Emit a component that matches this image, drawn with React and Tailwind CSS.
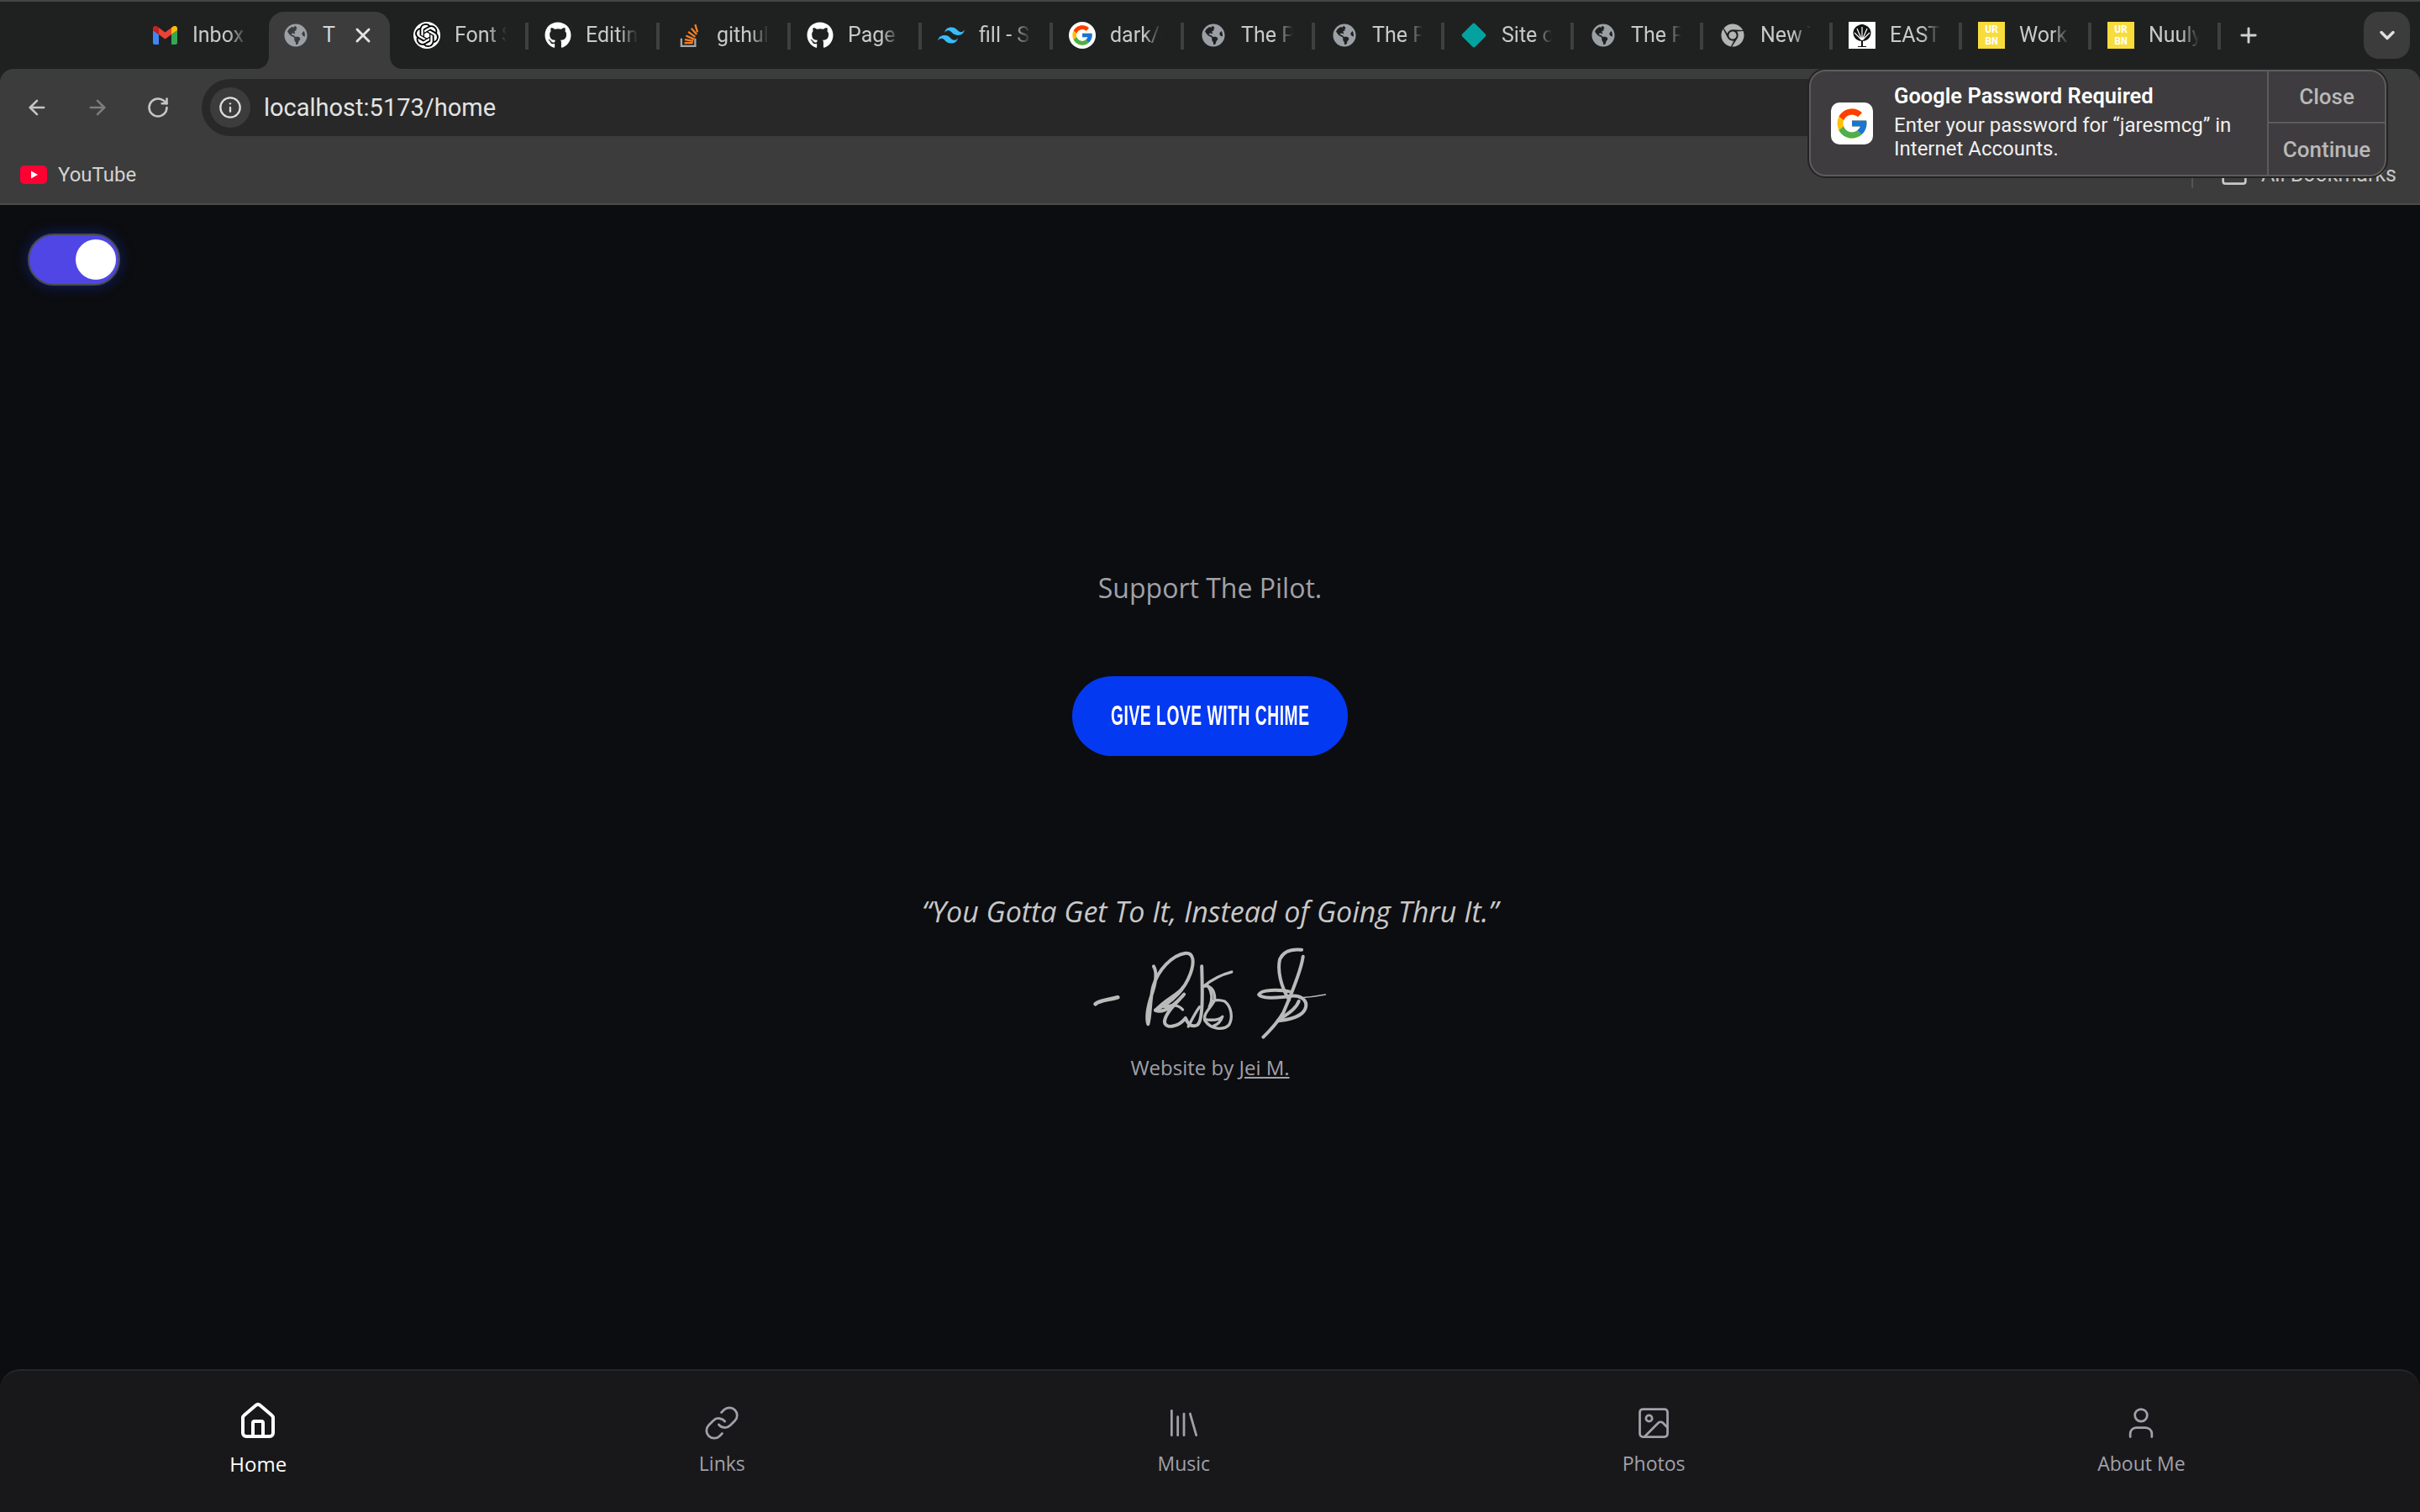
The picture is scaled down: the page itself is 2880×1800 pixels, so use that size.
import React from "react";
import { FaGithub, FaGlobeAmericas, FaChrome } from "react-icons/fa";
import { SiOpenai, SiTailwindcss } from "react-icons/si";
import { FcGoogle } from "react-icons/fc";
import { ArrowLeft, ArrowRight, RotateCw, Info, X, Plus, ChevronDown, House, Library, Image, User, Folder } from "lucide-react";

const Gmail = () => (
  <svg viewBox="0 0 29 22" className="w-[29px] h-[22px]">
    <path d="M0 5v15a2 2 0 0 0 2 2h5V10z" fill="#4285f4" />
    <path d="M29 5v15a2 2 0 0 1-2 2h-5V10z" fill="#34a853" />
    <path d="M22 2v8l7-5V3c0-3-3-4-5-2.5z" fill="#fbbc04" />
    <path d="M7 2v8l7.5 5.5L22 10V2l-7.500 5.500z" fill="#ea4335" />
    <path d="M0 3v2l7 5V2L5 .5C3-1 0 0 0 3z" fill="#c5221f" />
  </svg>
);

const Round = ({ children }) => (
  <div className="w-8 h-8 rounded-full bg-white flex items-center justify-center overflow-hidden">{children}</div>
);

const Globe = () => <FaGlobeAmericas className="w-7 h-7 text-[#9aa0a6]" />;

const StackOverflow = () => (
  <svg viewBox="0 0 24 32" className="w-[22px] h-[30px]" fill="none">
    <path d="M2 20v10h18V20" stroke="#a8a8a8" strokeWidth="2.500" />
    <path d="M6 26h11M6.500 21.500l11 2M8 16.500l10.500 4.500M11 11.500l9 6.500M15 7l7 8M20 2l3 10" stroke="#f48024" strokeWidth="2.500" />
  </svg>
);

const Urbn = () => (
  <div className="w-8 h-8 bg-[#f8dc3c] flex flex-col items-center justify-center text-white text-[13px] leading-[14px] font-bold font-['DejaVu_Sans_Mono',monospace]">
    <span>UR</span>
    <span>BN</span>
  </div>
);

const East = () => (
  <div className="w-8 h-8 bg-white flex items-center justify-center">
    <svg viewBox="0 0 32 32" className="w-8 h-8">
      <path d="M16 23C8 23 4 16 6 10c2-5 7-7 10-7s8 2 10 7c2 6-2 13-10 13z" fill="#111" />
      <path d="M16 22V6M16 22 10 8M16 22 22 8M16 22 7 13M16 22l9-9" stroke="#fff" strokeWidth="1.200" />
      <path d="M15 22h2v7h-2zM11 29h10v1H11z" fill="#111" />
    </svg>
  </div>
);

const TabIcon = ({ children }) => <div className="w-8 h-8 shrink-0 flex items-center justify-center">{children}</div>;

const Tab = ({ icon, title, narrow, noSep }) => (
  <div className={narrow ? "w-[154px] h-[58px] shrink-0 flex items-center" : "w-[156px] h-[58px] shrink-0 flex items-center"}>
    <div className="flex-1 min-w-0 flex items-center pl-[19px] pr-[22px] gap-[17px] -mt-[2px]">
      <TabIcon>{icon}</TabIcon>
      <span className="flex-1 min-w-0 overflow-hidden whitespace-nowrap text-[25px] leading-8 text-[#c9c9c9] font-['Roboto',sans-serif] [mask-image:linear-gradient(to_right,black_65%,transparent_100%)]">
        {title}
      </span>
    </div>
    {noSep ? null : <div className="w-1 h-8 shrink-0 bg-[#3d4040]" />}
  </div>
);

const ActiveTab = () => (
  <div className="w-[156px] h-[68px] shrink-0 pl-[3px] pr-[9px]">
    <div className="relative h-full bg-[#3c3c3c] rounded-t-[18px] flex items-center pl-[18px] pb-3 gap-[18px]">
      <svg viewBox="0 0 16 16" className="absolute -left-4 bottom-0 w-4 h-4"><path d="M16 0v16H0C10 16 16 10 16 0z" fill="#3c3c3c" /></svg>
      <svg viewBox="0 0 16 16" className="absolute -right-4 bottom-0 w-4 h-4"><path d="M0 0v16h16C6 16 0 10 0 0z" fill="#3c3c3c" /></svg>
      <Globe />
      <span className="text-[25px] leading-8 text-[#d8d8d8] font-['Roboto',sans-serif]">T</span>
      <X className="w-7 h-7 ml-[1px] text-[#e4e4e4]" strokeWidth={2.500} />
    </div>
  </div>
);

const NavItem = ({ icon, label, active }) => (
  <div className="flex flex-col items-center">
    <div className={active ? "h-12 flex items-center justify-center text-white" : "h-11 mt-1 flex items-center justify-center text-[#a1a1aa]"}>{icon}</div>
    <span className={active ? "mt-[11px] text-[24px] leading-8 text-white font-['Open_Sans',sans-serif]" : "mt-[10px] text-[23px] leading-8 text-[#a1a1aa] font-['Open_Sans',sans-serif]"}>
      {label}
    </span>
  </div>
);

const Signature = () => (
  <svg viewBox="90 55 835 330" className="w-[278px] h-[110px]" fill="none" stroke="#bababa" strokeWidth="12" strokeLinecap="round" strokeLinejoin="round">
    <path d="M98 260C115 245 140 247 178 236" strokeWidth="14" />
    <path d="M306 125C322 150 312 190 298 230C285 270 278 305 286 332C296 300 292 240 305 195C322 140 370 85 420 78C450 76 452 110 438 150C420 200 380 250 312 282C340 295 375 270 415 225C400 245 345 290 345 325C350 350 395 342 420 310C428 330 440 345 462 335C485 320 480 200 478 125" />
    <path d="M312 282C350 240 395 225 410 200M430 340C445 310 455 290 470 270M500 195C520 225 515 250 505 270M345 270C370 262 395 262 410 280" strokeWidth="10" />
    <path d="M585 145C545 155 510 175 482 198C505 190 525 205 525 245C510 275 480 295 490 320C510 350 555 355 575 335C590 310 585 270 560 250C545 245 530 245 520 248" strokeWidth="10" />
    <path d="M488 315C510 318 540 318 552 305C545 325 530 335 520 338" strokeWidth="10" />
    <path d="M835 66C800 62 770 70 757 100C748 140 760 195 790 245" />
    <path d="M840 90C835 130 800 220 770 290C750 325 722 355 698 378" />
    <path d="M790 215C750 207 690 208 682 226C690 240 740 240 790 232C830 225 855 245 850 270C845 300 800 315 750 320C775 300 815 280 825 250" />
    <path d="M825 238C860 236 890 232 920 226" strokeWidth="5" />
  </svg>
);

const LinkIcon = () => (
  <svg viewBox="0 0 24 24" className="w-11 h-11" fill="none" stroke="currentColor" strokeWidth="1.500" strokeLinecap="round" strokeLinejoin="round">
    <path d="M10 13a5 5 0 0 0 7.540.540l3-3a5 5 0 0 0-7.070-7.070l-1.720 1.710" />
    <path d="M14 11a5 5 0 0 0-7.540-.540l-3 3a5 5 0 0 0 7.070 7.070l1.710-1.710" />
  </svg>
);

export default function App() {
  return (
    <div className="relative w-full h-[1800px] flex flex-col bg-[#0c0d10] overflow-hidden">
      {/* browser chrome */}
      <div className="shrink-0 bg-[#1f2120] border-t-2 border-[#454545]">
        <div className="h-[80px] pt-3 pl-[161px] pr-3 flex items-start">
          <Tab icon={<Gmail />} title="Inbox" noSep />
          <ActiveTab />
          <Tab icon={<Round><SiOpenai className="w-7 h-7 text-black" /></Round>} title="Font S" />
          <Tab icon={<FaGithub className="w-8 h-8 text-white" />} title="Editin" />
          <Tab icon={<StackOverflow />} title="githul" />
          <Tab icon={<FaGithub className="w-8 h-8 text-white" />} title="Page" />
          <Tab icon={<SiTailwindcss className="w-8 h-8 text-[#38bdf8]" />} title="fill - S" />
          <Tab icon={<Round><FcGoogle className="w-7 h-7" /></Round>} title="dark/l" />
          <Tab icon={<Globe />} title="The P" />
          <Tab icon={<Globe />} title="The P" narrow />
          <Tab icon={<div className="w-[30px] h-[30px] bg-[#04a29f] rotate-45 scale-[.72] rounded-[3px]" />} title="Site o" narrow />
          <Tab icon={<Globe />} title="The P" narrow />
          <Tab icon={<FaChrome className="w-7 h-7 text-[#b4b4b4]" />} title="New T" narrow />
          <Tab icon={<East />} title="EAST" narrow />
          <Tab icon={<Urbn />} title="Work" narrow />
          <Tab icon={<Urbn />} title="Nuuly" narrow />
          <div className="h-[56px] flex items-center ml-[19px]">
            <Plus className="w-7 h-7 text-[#d0d0d0]" strokeWidth={2.500} />
          </div>
          <div className="ml-auto w-[55px] h-[56px] rounded-[18px] bg-[#3c3c3c] flex items-center justify-center">
            <ChevronDown className="w-7 h-7 text-[#e0e0e0]" strokeWidth={3} />
          </div>
        </div>
        <div className="h-[162px] bg-[#3c3c3c] rounded-t-[16px] border-b-2 border-[#4c4c4c] flex flex-col">
          <div className="h-[68px] mt-3 flex items-center pl-[30px] pr-[60px]">
            <ArrowLeft className="w-7 h-7 text-[#c6c6c6]" strokeWidth={2.200} />
            <ArrowRight className="w-7 h-7 ml-[44px] text-[#7d7d7d]" strokeWidth={2.200} />
            <RotateCw className="w-7 h-7 ml-[44px] text-[#c6c6c6]" strokeWidth={2.200} />
            <div className="ml-[38px] flex-1 h-[68px] rounded-full bg-[#282828] flex items-center pl-[10px]">
              <div className="w-12 h-12 rounded-full bg-[#3c3c3c] flex items-center justify-center">
                <Info className="w-7 h-7 text-[#dcdcdc]" strokeWidth={2} />
              </div>
              <span className="ml-4 text-[29px] leading-9 text-[#e3e3e3] font-['Roboto',sans-serif]">localhost:5173/home</span>
            </div>
          </div>
          <div className="flex-1 flex items-center pl-6 pr-7 pt-3">
            <svg viewBox="0 0 32 22" className="w-8 h-[22px]">
              <rect width="32" height="22" rx="5" fill="#ff0033" />
              <path d="M13 6.500l8 4.500-8 4.500z" fill="#fff" />
            </svg>
            <span className="ml-[13px] text-[24px] leading-8 text-[#d2d2d2] font-['Roboto',sans-serif]">YouTube</span>
            <div className="ml-auto w-[2px] h-8 bg-[#555555]" />
            <Folder className="ml-[33px] w-8 h-8 text-[#c8c8c8]" strokeWidth={2} />
            <span className="ml-4 text-[25px] leading-8 text-[#c8c8c8] font-['Roboto',sans-serif]">All Bookmarks</span>
          </div>
        </div>
      </div>

      {/* macOS notification */}
      <div className="absolute left-[2153px] top-[83px] w-[687px] h-[127px] rounded-[20px] bg-[#3e3c3e] border-2 border-[#5c5c5c] shadow-[0_0_0_2px_#232323] flex overflow-hidden">
        <div className="flex-1 flex items-center pl-[24px] gap-[25px]">
          <div className="w-[50px] h-[50px] rounded-[10px] bg-white flex items-center justify-center shrink-0">
            <FcGoogle className="w-[42px] h-[42px]" />
          </div>
          <div className="flex flex-col font-['Roboto',sans-serif] text-white -mt-[3px]">
            <span className="text-[25.500px] leading-[30px] font-semibold">Google Password Required</span>
            <span className="mt-[6px] text-[24px] leading-[28px] text-[#f0f0f0]">Enter your password for “jaresmcg” in</span>
            <span className="text-[24px] leading-[28px] text-[#f0f0f0]">Internet Accounts.</span>
          </div>
        </div>
        <div className="w-[140px] shrink-0 border-l-2 border-[#5c5c5c] flex flex-col text-[26px] text-[#b8b8b8] font-['Roboto',sans-serif] font-medium">
          <div className="h-[62px] flex items-center justify-center border-b-2 border-[#5c5c5c]">Close</div>
          <div className="flex-1 flex items-center justify-center pt-[2px]">Continue</div>
        </div>
      </div>

      {/* page */}
      <main className="flex-1 flex flex-col">
        <div className="pl-[33px] pt-[34px]">
          <div className="w-[110px] h-[62px] rounded-full bg-[#4f46e5] border-2 border-[#4a4a4a] shadow-[0_0_16px_#10206e] flex items-center justify-end pr-[3px]">
            <div className="w-12 h-12 rounded-full bg-white" />
          </div>
        </div>
        <div className="mt-[338px] flex flex-col items-center font-['Open_Sans',sans-serif]">
          <p className="text-[32px] leading-[44px] text-[#a1a1aa]">Support The Pilot.</p>
          <button className="mt-[83px] w-[328px] h-[95px] rounded-full bg-[#0439f2] flex items-center justify-center">
            <span className="whitespace-nowrap -mt-1 text-[34px] leading-8 font-bold text-white font-['Liberation_Sans',sans-serif] tracking-[1px] scale-x-[.565]">GIVE LOVE WITH CHIME</span>
          </button>
          <p className="mt-[163px] text-[34px] leading-[44px] italic text-[#c8c8c8]">“You Gotta Get To It, Instead of Going Thru It.”</p>
          <div className="mt-[20px]"><Signature /></div>
          <p className="mt-[18px] text-[24px] leading-8 text-[#a1a1aa]">
            Website by <span className="underline">Jei M.</span>
          </p>
        </div>
      </main>

      {/* bottom nav */}
      <nav className="shrink-0 h-[170px] rounded-t-[24px] bg-[#18181b] border-t-2 border-[#27272a] pl-[28px] pr-[34px] pt-[36px] flex justify-around items-start">
        <NavItem active label="Home" icon={<House className="w-12 h-12" strokeWidth={2} />} />
        <NavItem label="Links" icon={<LinkIcon />} />
        <NavItem label="Music" icon={<Library className="w-11 h-11" strokeWidth={1.500} />} />
        <NavItem label="Photos" icon={<Image className="w-11 h-11" strokeWidth={1.500} />} />
        <NavItem label="About Me" icon={<User className="w-11 h-11" strokeWidth={1.500} />} />
      </nav>
    </div>
  );
}
